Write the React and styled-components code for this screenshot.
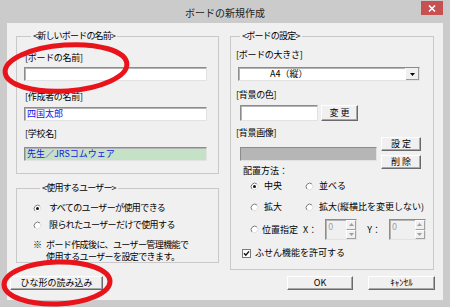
import styled, { createGlobalStyle } from "styled-components";

const GlobalStyle = createGlobalStyle`
  body {
    margin: 0;
    background: #cbcbcb;
  }
`;

function Radio({ checked }) {
  return (
    <svg width="9" height="9" viewBox="0 0 9 9">
      <circle cx="4.5" cy="4.5" r="3.6" fill="#fff" />
      <path d="M2.03 6.97 A3.5 3.5 0 0 1 6.97 2.03" fill="none" stroke="#7a7a7a" strokeWidth="1" />
      <path d="M6.97 2.03 A3.5 3.5 0 0 1 2.03 6.97" fill="none" stroke="#dcdcdc" strokeWidth="1" />
      {checked && <circle cx="4.5" cy="4.5" r="1.5" fill="#111" />}
    </svg>
  );
}

function Check() {
  return (
    <svg width="9" height="9" viewBox="0 0 9 9">
      <rect x="0.5" y="0.5" width="8" height="8" fill="#fff" stroke="#7a7a7a" />
      <path d="M2 4.3 L3.8 6.3 L7 2.4" fill="none" stroke="#111" strokeWidth="1.4" />
    </svg>
  );
}

function SpinBox({ width }) {
  return (
    <Spin $width={width}>
      <SpinValue>0</SpinValue>
      <SpinArrows>
        <SpinButton>
          <svg width="5" height="3" viewBox="0 0 5 3">
            <path d="M0 3 L2.5 0 L5 3 Z" fill="#a0a0a0" />
          </svg>
        </SpinButton>
        <SpinButton>
          <svg width="5" height="3" viewBox="0 0 5 3">
            <path d="M0 0 L2.5 3 L5 0 Z" fill="#a0a0a0" />
          </svg>
        </SpinButton>
      </SpinArrows>
    </Spin>
  );
}

export default function App() {
  return (
    <>
      <GlobalStyle />
      <Window>
        <TitleBar>
          <span />
          <Title>ボードの新規作成</Title>
          <Close>
            <svg width="8" height="7" viewBox="0 0 8 7">
              <path d="M1 0.5 L7 6.5 M7 0.5 L1 6.5" stroke="#fff" strokeWidth="1.6" />
            </svg>
          </Close>
        </TitleBar>

        <Client>
          <Columns>
            <LeftCol>
              <Group $pt={10} $pb={12} $pl={7} $pr={11}>
                <Legend $ml={7}>&lt;新しいボードの名前&gt;</Legend>
                <Label>[ボードの名前]</Label>
                <TextBox $mt={3} />
                <Label $mt={10}>[作成者の名前]</Label>
                <TextBox $mt={4}>四国太郎</TextBox>
                <Label $mt={7}>[学校名]</Label>
                <TextBox $mt={7} $bg="#c6e2c6">先生／JRSコムウェア</TextBox>
              </Group>

              <Group $pt={8} $pb={0} $pl={16} $pr={8}>
                <Legend $ml={7}>&lt;使用するユーザー&gt;</Legend>
                <Option $gap={7} $tight>
                  <Radio checked />
                  すべてのユーザーが使用できる
                </Option>
                <Option $gap={7} $mt={5} $tight>
                  <Radio />
                  限られたユーザーだけで使用する
                </Option>
                <Note>
                  <NoteLine>
                    <span>※</span>
                    <span>ボード作成後に、ユーザー管理機能で</span>
                  </NoteLine>
                  <NoteLine>
                    <span />
                    <span>使用するユーザーを設定できます。</span>
                  </NoteLine>
                </Note>
              </Group>
            </LeftCol>

            <RightGroup>
              <Legend $ml={5}>&lt;ボードの設定&gt;</Legend>
              <Label>[ボードの大きさ]</Label>
              <Select>
                <SelectText>A4（縦）</SelectText>
                <SelectArrow>
                  <svg width="5" height="3" viewBox="0 0 5 3">
                    <path d="M0 0 L2.5 3 L5 0 Z" fill="#000" />
                  </svg>
                </SelectArrow>
              </Select>

              <Label $mt={8}>[背景の色]</Label>
              <ColorRow>
                <ColorBox />
                <Button $w={37} $h={16}>変 更</Button>
              </ColorRow>

              <ImageSection>
                <ImageLeft>
                  <Label>[背景画像]</Label>
                  <ImageBox />
                  <Heading>配置方法：</Heading>
                </ImageLeft>
                <ImageButtons>
                  <Button $w={40} $h={14}>設 定</Button>
                  <Button $w={40} $h={14}>削 除</Button>
                </ImageButtons>
              </ImageSection>

              <Placement $mt={3}>
                <Option $gap={5}>
                  <Radio checked />
                  中央
                </Option>
                <Option $gap={5}>
                  <Radio />
                  並べる
                </Option>
              </Placement>
              <Placement $mt={9}>
                <Option $gap={5}>
                  <Radio />
                  拡大
                </Option>
                <Option $gap={5}>
                  <Radio />
                  拡大(縦横比を変更しない)
                </Option>
              </Placement>
              <PositionRow>
                <Option $gap={3}>
                  <Radio />
                  位置指定
                </Option>
                <Coord>X：</Coord>
                <SpinBox width={32} />
                <Coord $ml={10}>Y：</Coord>
                <SpinBox width={37} />
              </PositionRow>
              <CheckRow>
                <Check />
                ふせん機能を許可する
              </CheckRow>
            </RightGroup>
          </Columns>

          <BottomRow>
            <Button $w={93} $h={14}>ひな形の読み込み</Button>
            <Actions>
              <Button $w={66} $h={14}>OK</Button>
              <Button $w={67} $h={14}>ｷｬﾝｾﾙ</Button>
            </Actions>
          </BottomRow>
        </Client>

        <Marks width="450" height="307" viewBox="0 0 450 307">
          <ellipse
            cx="66"
            cy="68"
            rx="61"
            ry="23"
            transform="rotate(-4 66 68)"
            fill="none"
            stroke="#e8131b"
            strokeWidth="5"
          />
          <ellipse
            cx="57"
            cy="283"
            rx="53"
            ry="21"
            transform="rotate(-2 57 283)"
            fill="none"
            stroke="#e8131b"
            strokeWidth="5"
          />
        </Marks>
      </Window>
    </>
  );
}

const Window = styled.div`
  position: relative;
  width: 450px;
  height: 307px;
  background: #cbcbcb;
  display: flex;
  flex-direction: column;
  overflow: hidden;
  font-family: "Noto Sans CJK JP", "Noto Sans", sans-serif;
  font-size: 9px;
  line-height: 12px;
  color: #000;
`;

const TitleBar = styled.div`
  height: 23px;
  display: grid;
  grid-template-columns: 1fr auto 1fr;
  align-items: start;
  padding: 0 7px;
`;

const Title = styled.div`
  font-size: 10px;
  line-height: 14px;
  padding-top: 6px;
  color: #222;
`;

const Close = styled.div`
  justify-self: end;
  width: 22px;
  height: 14px;
  margin-top: 1px;
  background: #c75050;
  display: flex;
  align-items: center;
  justify-content: center;
`;

const Client = styled.div`
  flex: 1;
  margin: 0 7px 7px;
  background: #f0f0f0;
  padding: 7px 8px 0 3px;
  display: flex;
  flex-direction: column;
`;

const Columns = styled.div`
  display: flex;
  align-items: flex-start;
  gap: 11px;
  padding-left: 6px;
`;

const LeftCol = styled.div`
  width: 203px;
  display: flex;
  flex-direction: column;
  gap: 8px;
`;

const Group = styled.fieldset`
  margin: 0;
  min-width: 0;
  border: 1px solid #c9c9c9;
  padding: ${(p) => p.$pt}px ${(p) => p.$pr}px ${(p) => p.$pb}px ${(p) => p.$pl}px;
  display: flex;
  flex-direction: column;
  align-items: flex-start;
`;

const RightGroup = styled(Group).attrs({ $pt: 7, $pb: 10, $pl: 4, $pr: 12 })`
  width: 204px;
  box-sizing: border-box;
`;

const Legend = styled.legend`
  padding: 0 2px;
  margin-left: ${(p) => p.$ml}px;
  font-size: 9px;
  line-height: 12px;
  letter-spacing: -0.8px;
`;

const Label = styled.div`
  margin-top: ${(p) => p.$mt || 0}px;
  margin-left: 1px;
  height: 12px;
  letter-spacing: -0.3px;
`;

const sunken = `
  box-sizing: border-box;
  border: 1px solid;
  border-color: #8c8c8c #e2e2e2 #e2e2e2 #8c8c8c;
  box-shadow: inset 1px 1px 0 #b4b4b4;
`;

const TextBox = styled.div`
  ${sunken}
  align-self: stretch;
  height: 14px;
  margin-top: ${(p) => p.$mt || 0}px;
  background: ${(p) => p.$bg || "#fff"};
  color: #1414e6;
  font-size: 9px;
  line-height: 12px;
  padding-left: 2px;
`;

const Option = styled.div`
  display: flex;
  align-items: center;
  gap: ${(p) => p.$gap}px;
  height: 12px;
  margin-top: ${(p) => p.$mt || 0}px;
  white-space: nowrap;
  letter-spacing: ${(p) => (p.$tight ? "-0.6px" : "0")};
`;

const Note = styled.div`
  margin-top: 8px;
  letter-spacing: -0.6px;
`;

const NoteLine = styled.div`
  display: grid;
  grid-template-columns: 13px auto;
  height: 11.5px;
  line-height: 11.5px;
  white-space: nowrap;
`;

const Select = styled.div`
  ${sunken}
  width: 182px;
  height: 14px;
  margin: 6px 0 0 3px;
  background: #fff;
  display: flex;
  align-items: stretch;
`;

const SelectText = styled.div`
  flex: 1;
  padding-left: 31px;
  line-height: 12px;
`;

const SelectArrow = styled.div`
  width: 13px;
  display: flex;
  align-items: center;
  justify-content: center;
  background: #f0f0f0;
  border-left: 1px solid #fff;
  box-shadow: inset -1px -1px 0 #9a9a9a;
`;

const ColorRow = styled.div`
  display: flex;
  gap: 3px;
  margin: 4px 0 0 5px;
`;

const ColorBox = styled.div`
  ${sunken}
  width: 78px;
  height: 16px;
  background: #fff;
`;

const Button = styled.div`
  box-sizing: border-box;
  width: ${(p) => p.$w}px;
  height: ${(p) => p.$h}px;
  background: #f0f0f0;
  border: 1px solid;
  border-color: #ffffff #6a6a6a #6a6a6a #ffffff;
  box-shadow: inset -1px -1px 0 #a8a8a8;
  display: flex;
  align-items: center;
  justify-content: center;
  font-size: 9px;
  white-space: nowrap;
`;

const ImageSection = styled.div`
  align-self: stretch;
  display: flex;
  justify-content: space-between;
  margin-top: 6px;
`;

const ImageLeft = styled.div`
  display: flex;
  flex-direction: column;
  align-items: flex-start;
`;

const ImageBox = styled.div`
  ${sunken}
  width: 137px;
  height: 14px;
  margin: 8px 0 0 5px;
  background: #b6b6b6;
`;

const Heading = styled.div`
  margin: 4px 0 0 8px;
  height: 12px;
`;

const ImageButtons = styled.div`
  display: flex;
  flex-direction: column;
  gap: 4px;
  padding-top: 10px;
`;

const Placement = styled.div`
  display: grid;
  grid-template-columns: 55px auto;
  margin: ${(p) => p.$mt}px 0 0 15px;
`;

const PositionRow = styled.div`
  display: flex;
  align-items: center;
  margin: 6px 0 0 15px;
  height: 21px;
`;

const Coord = styled.span`
  margin: 0 8px 0 ${(p) => p.$ml || 5}px;
`;

const Spin = styled.div`
  ${sunken}
  width: ${(p) => p.$width}px;
  height: 21px;
  background: #f0f0f0;
  display: flex;
`;

const SpinValue = styled.div`
  flex: 1;
  color: #a0a0a0;
  padding: 1px 0 0 2px;
`;

const SpinArrows = styled.div`
  width: 10px;
  display: flex;
  flex-direction: column;
`;

const SpinButton = styled.div`
  flex: 1;
  display: flex;
  align-items: center;
  justify-content: center;
  border: 1px solid;
  border-color: #fff #a0a0a0 #a0a0a0 #fff;
`;

const CheckRow = styled.div`
  display: flex;
  align-items: center;
  gap: 4px;
  height: 12px;
  margin: 7px 0 0 7px;
`;

const BottomRow = styled.div`
  display: flex;
  justify-content: space-between;
  align-items: center;
  margin-top: 6px;
`;

const Actions = styled.div`
  display: flex;
  gap: 15px;
`;

const Marks = styled.svg`
  position: absolute;
  top: 0;
  left: 0;
  pointer-events: none;
`;
